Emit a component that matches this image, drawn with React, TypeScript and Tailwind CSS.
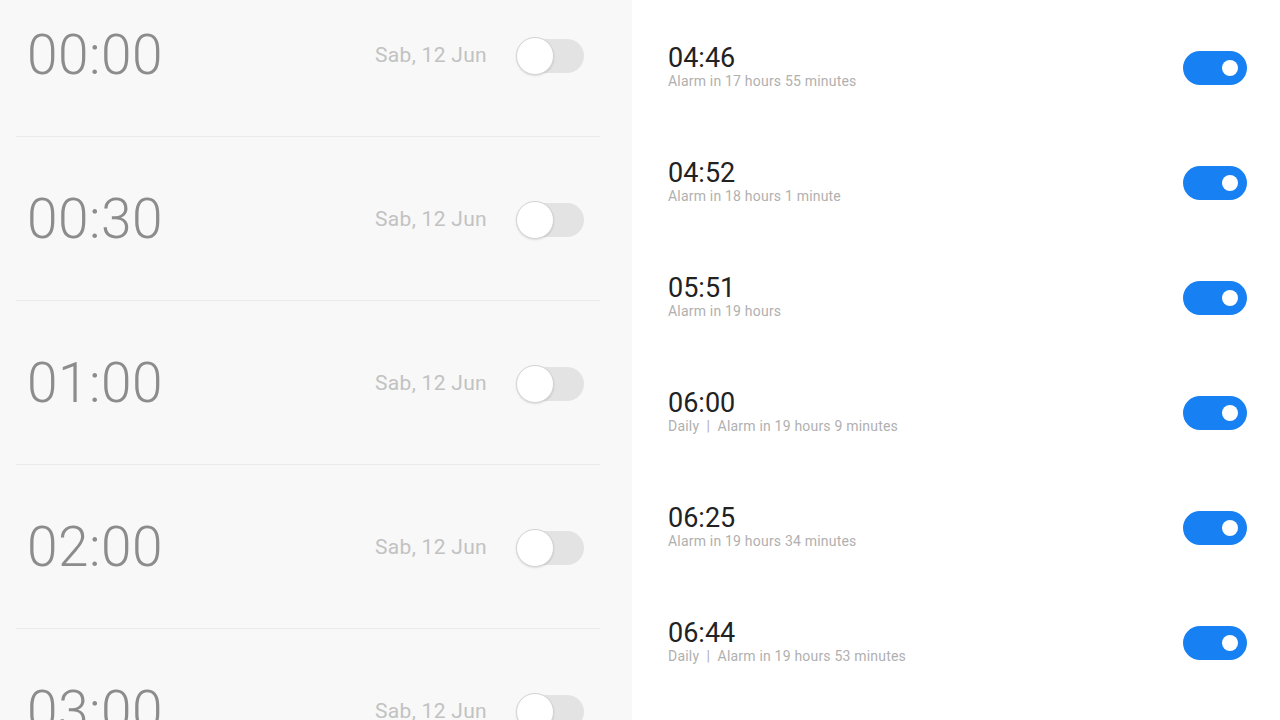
import React from "react";

const left = ["00:00", "00:30", "01:00", "02:00", "03:00"];
const right = [
  { t: "04:46", s: "Alarm in 17 hours 55 minutes" },
  { t: "04:52", s: "Alarm in 18 hours 1 minute" },
  { t: "05:51", s: "Alarm in 19 hours" },
  { t: "06:00", s: "Daily  |  Alarm in 19 hours 9 minutes" },
  { t: "06:25", s: "Alarm in 19 hours 34 minutes" },
  { t: "06:44", s: "Daily  |  Alarm in 19 hours 53 minutes" },
];

function OffToggle() {
  return (
    <div className="relative w-[68px] h-[38px] flex items-center">
      <div className="ml-[2px] w-[66px] h-[34px] rounded-full bg-[#e3e3e3]" />
      <div className="absolute left-0 top-0 w-[38px] h-[38px] rounded-full bg-white border border-[#d4d4d4] shadow-[0_1px_2px_rgba(0,0,0,0.12)]" />
    </div>
  );
}

function OnToggle() {
  return (
    <div className="w-[64px] h-[34px] rounded-full bg-[#1780f2] flex items-center justify-end pr-[9px]">
      <div className="w-[16px] h-[16px] rounded-full bg-white" />
    </div>
  );
}

export default function App() {
  return (
    <div className="w-[1280px] h-[720px] overflow-hidden flex bg-white" style={{ fontFamily: "Roboto, 'Noto Sans', sans-serif" }}>
      <div className="w-[632px] h-full bg-[#f8f8f8] overflow-hidden">
        <div className="-mt-[27px] pl-[16px] pr-[32px]">
          {left.map((t) => (
            <div key={t} className="h-[164px] flex items-center border-b border-[#ebebeb]">
              <div className="flex-1 pl-[11px] pt-[2px] text-[55px] font-light text-[#8c8c8c] tracking-[0.5px] leading-none">{t}</div>
              <div className="text-[21px] tracking-[0.3px] text-[#c2c2c2] mr-[29px] pt-[2px]">Sab, 12 Jun</div>
              <div className="mr-[16px] pt-[2px]">
                <OffToggle />
              </div>
            </div>
          ))}
        </div>
      </div>
      <div className="flex-1 h-full pt-[10px] pl-[36px] pr-[33px]">
        {right.map((r) => (
          <div key={r.t} className="h-[115px] flex items-center">
            <div className="flex-1 -mt-[2px]">
              <div className="text-[27px] leading-[30px] text-[#222]">{r.t}</div>
              <div className="text-[14px] leading-[17px] tracking-[0.2px] text-[#b0b0b0] whitespace-pre">{r.s}</div>
            </div>
            <OnToggle />
          </div>
        ))}
      </div>
    </div>
  );
}
